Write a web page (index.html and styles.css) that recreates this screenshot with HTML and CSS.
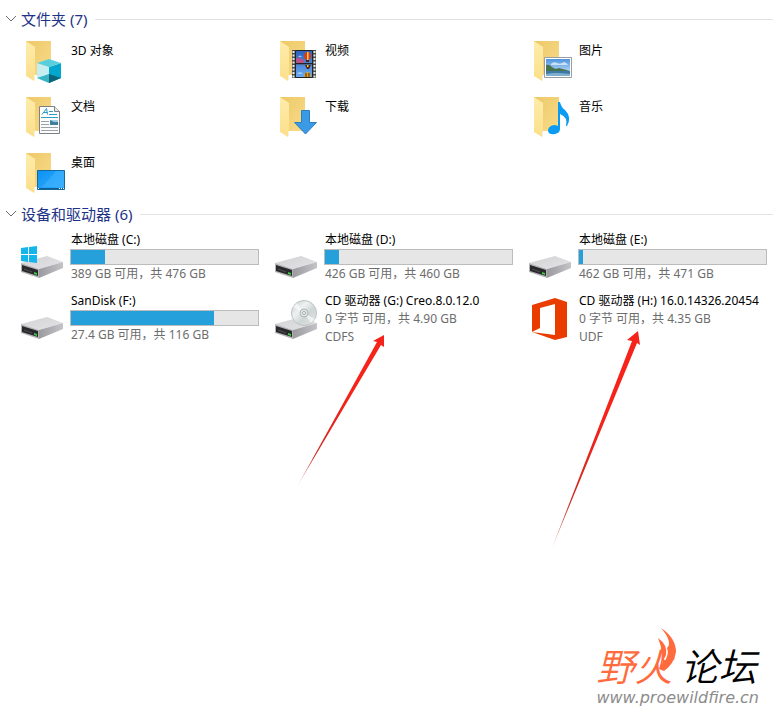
FILE: index.html
```
<!DOCTYPE html>
<html lang="zh-CN">
<head>
    <meta charset="UTF-8">
    <meta name="viewport" content="width=device-width, initial-scale=1.0">
    <title>此电脑</title>
    <link rel="stylesheet" href="styles.css">
</head>
<body>
    <!-- shared icon shapes -->
    <svg class="defs" width="0" height="0" aria-hidden="true">
        <defs>
            <linearGradient id="back" x1="0" y1="0" x2="1" y2="1">
                <stop offset="0" stop-color="#edc867"/>
                <stop offset="1" stop-color="#f8dc8b"/>
            </linearGradient>
            <linearGradient id="flap" x1="0" y1="0" x2="0" y2="1">
                <stop offset="0" stop-color="#ffecab"/>
                <stop offset="1" stop-color="#fbdf8a"/>
            </linearGradient>
            <linearGradient id="metal" x1="0" y1="0" x2="1" y2="1">
                <stop offset="0" stop-color="#d2d2d5"/>
                <stop offset="1" stop-color="#e4e4e7"/>
            </linearGradient>
            <linearGradient id="side" x1="0" y1="0" x2="1" y2="0">
                <stop offset="0" stop-color="#9b9b9f"/>
                <stop offset="1" stop-color="#c4c4c8"/>
            </linearGradient>
            <linearGradient id="sky" x1="0" y1="0" x2="0" y2="1">
                <stop offset="0" stop-color="#4f94dd"/>
                <stop offset="1" stop-color="#d3ebfa"/>
            </linearGradient>
            <linearGradient id="film" x1="0" y1="0" x2="0" y2="1">
                <stop offset="0" stop-color="#2d62bd"/>
                <stop offset="1" stop-color="#69aaf0"/>
            </linearGradient>
            <linearGradient id="screen" x1="0" y1="0" x2="1" y2="1">
                <stop offset="0" stop-color="#0c91f2"/>
                <stop offset="1" stop-color="#31adff"/>
            </linearGradient>
            <linearGradient id="disc" x1="0" y1="0" x2="1" y2="1">
                <stop offset="0" stop-color="#c5cccc"/>
                <stop offset="0.35" stop-color="#eef1f1"/>
                <stop offset="0.6" stop-color="#ced5d5"/>
                <stop offset="1" stop-color="#e5e9e9"/>
            </linearGradient>
            <linearGradient id="arrow" x1="0" y1="1" x2="0" y2="0">
                <stop offset="0" stop-color="#b8372f" stop-opacity="0.5"/>
                <stop offset="0.2" stop-color="#cc2a20"/>
                <stop offset="0.6" stop-color="#f5231a"/>
            </linearGradient>
            <symbol id="folder" viewBox="0 0 48 48">
                <path d="M7 4H32V38H16L7 36Z" fill="url(#back)"/>
                <path d="M7 4L16 10V38L15 39V44L7 39Z" fill="url(#flap)"/>
                <path d="M15 39l1-1v5l-1 1z" fill="#f3efe4"/>
            </symbol>
            <symbol id="drive" viewBox="0 0 48 48">
                <path d="M2 32L28 25L44 31L20 38Z" fill="url(#metal)"/>
                <path d="M20 38L44 31V37L20 47Z" fill="url(#side)"/>
                <path d="M2 32L20 38V47L2 41Z" fill="#b3b3b6"/>
                <path d="M3 34L19 39V45L3 40Z" fill="#29292c"/>
                <path d="M5 38l8 3" stroke="#505052"/>
                <path d="M15 41l3 1v2l-3-1z" fill="#3dcb42"/>
            </symbol>
        </defs>
    </svg>

    <main>
        <section>
            <h2 class="group-title">
                <svg class="chevron" width="12" height="8" viewBox="0 0 12 8" aria-hidden="true"><path d="M1 1l5 5 5-5"/></svg>
                文件夹 (7)
            </h2>
            <ul class="tiles folders">
                <li class="tile">
                    <svg class="icon" viewBox="0 0 48 48" aria-hidden="true">
                        <use href="#folder"/>
                        <path d="M18 26L30 30V46L18 41Z" fill="#c5eef3"/>
                        <path d="M30 30L42 26V41L30 46Z" fill="#03a6cf"/>
                        <path d="M18 26L30 22L42 26L30 30Z" fill="#59cfde"/>
                        <path d="M18 41L30 37V46Z" fill="#37b5c4"/>
                        <path d="M30 37L42 41L30 46Z" fill="#08657a"/>
                    </svg>
                    <span class="name">3D 对象</span>
                </li>
                <li class="tile">
                    <svg class="icon" viewBox="0 0 48 48" aria-hidden="true">
                        <use href="#folder"/>
                        <path d="M19 13H43V41H19Z" fill="#4b4b4b"/>
                        <path d="M20.500 14V41M41.500 14V41" stroke="#e9e9e9" stroke-width="2" stroke-dasharray="2 1.500"/>
                        <path d="M22.500 14H39.500V26H22.500ZM22.500 27.500H39.500V40H22.500Z" fill="url(#film)"/>
                        <path d="M23 22l3-2 2 2 3 1v3h-8z" fill="#b9518a"/>
                        <path d="M25 20q2-3 4 0zM24 37q3-4 6 0z" fill="#9fc8f2"/>
                        <ellipse cx="34.500" cy="19" rx="3.500" ry="4" fill="#d5392a"/>
                        <path d="M34 15h1.500v8h-1.500z" fill="#f5d327"/>
                        <path d="M33 23h3v2h-3zM32 28h6l-2 4h-2z" fill="#4c211f"/>
                        <path d="M34 28h1.500v2h-1.500z" fill="#f5d327"/>
                        <path d="M31 40q0-5 3.500-5t3.500 5z" fill="#d5a526"/>
                        <path d="M33 36v4M36 36v4" stroke="#5d2523"/>
                        <path d="M22.500 13.500H39.500V40.500H22.500ZM22 26.500H40" fill="none" stroke="#222"/>
                    </svg>
                    <span class="name">视频</span>
                </li>
                <li class="tile">
                    <svg class="icon" viewBox="0 0 48 48" aria-hidden="true">
                        <use href="#folder"/>
                        <path d="M17.500 20.500H44.500V40.500H17.500Z" fill="#fff" stroke="#999da1"/>
                        <path d="M19 22H43V39H19Z" fill="url(#sky)"/>
                        <path d="M24 27q3-3 6-1t7-1q3 1 4 3H24z" fill="#c9e2f7"/>
                        <path d="M19 28q3-1 6 2t7 1l11 3v2H19z" fill="#46734e"/>
                        <path d="M19 34q10 0 24 0v5H19z" fill="#3f79a6"/>
                        <path d="M19 37q8-2 24 0v2H19z" fill="#7fb0cf"/>
                    </svg>
                    <span class="name">图片</span>
                </li>
                <li class="tile">
                    <svg class="icon" viewBox="0 0 48 48" aria-hidden="true">
                        <use href="#folder"/>
                        <path d="M20.500 13.500H35.500L40.500 18.500V40.500H20.500Z" fill="#fdfdfd" stroke="#7c8185"/>
                        <path d="M35.500 13.500V18.500H40.500" fill="#e3e5e7" stroke="#7c8185"/>
                        <path d="M23 21.500l4.500-6 1 6M24.500 19.500h4" fill="none" stroke="#2b9ac4"/>
                        <path d="M30 18.500h4M30 21.500h8M22 24.500h17" stroke="#2c9fc9"/>
                        <path d="M22 28.500h8M22 31.500h8M22 34.500h17M22 37.500h17" stroke="#9ca3a8"/>
                        <path d="M31 27h8v5h-8z" fill="#3e8096"/>
                        <path d="M31 27h8v2h-4z" fill="#a9cfe8"/>
                    </svg>
                    <span class="name">文档</span>
                </li>
                <li class="tile">
                    <svg class="icon" viewBox="0 0 48 48" aria-hidden="true">
                        <use href="#folder"/>
                        <path d="M28.500 17.500H36.500V29.500H43.500L32.500 41L21.500 29.500H28.500Z" fill="#3b9ae6" stroke="#2c7fc2"/>
                    </svg>
                    <span class="name">下载</span>
                </li>
                <li class="tile">
                    <svg class="icon" viewBox="0 0 48 48" aria-hidden="true">
                        <use href="#folder"/>
                        <path d="M31 9h2q1 5 5 8 7 7 2 16h-1q2-9-6-12V36q0 4-5 5-6 1-7-3 0-5 6-6 2 0 4 1z" fill="#0b9bf2"/>
                    </svg>
                    <span class="name">音乐</span>
                </li>
                <li class="tile">
                    <svg class="icon" viewBox="0 0 48 48" aria-hidden="true">
                        <use href="#folder"/>
                        <path d="M18.500 21.500H45.500V40.500H18.500Z" fill="url(#screen)" stroke="#146a9e"/>
                        <path d="M37 22H45V38H23Z" fill="#48b6ff" opacity="0.5"/>
                        <path d="M19 39.500H45" stroke="#0d5c92"/>
                        <path d="M19 39.500h1M40 39.500h1M42 39.500h1M44 39.500h1" stroke="#fff"/>
                    </svg>
                    <span class="name">桌面</span>
                </li>
            </ul>
        </section>

        <section>
            <h2 class="group-title">
                <svg class="chevron" width="12" height="8" viewBox="0 0 12 8" aria-hidden="true"><path d="M1 1l5 5 5-5"/></svg>
                设备和驱动器 (6)
            </h2>
            <ul class="tiles drives">
                <li class="tile">
                    <svg class="icon" viewBox="0 0 48 48" aria-hidden="true">
                        <use href="#drive"/>
                        <path d="M2 17L9 16V23H2ZM10 16L18 15V23H10ZM2 24H9V31L2 30ZM10 24H18V32L10 31Z" fill="#13b5ea"/>
                    </svg>
                    <div class="info">
                        <label class="name" for="disk-c">本地磁盘 (C:)</label>
                        <progress id="disk-c" value="87" max="476"></progress>
                        <span class="detail">389 GB 可用，共 476 GB</span>
                    </div>
                </li>
                <li class="tile">
                    <svg class="icon" viewBox="0 0 48 48" aria-hidden="true"><use href="#drive"/></svg>
                    <div class="info">
                        <label class="name" for="disk-d">本地磁盘 (D:)</label>
                        <progress id="disk-d" value="34" max="460"></progress>
                        <span class="detail">426 GB 可用，共 460 GB</span>
                    </div>
                </li>
                <li class="tile">
                    <svg class="icon" viewBox="0 0 48 48" aria-hidden="true"><use href="#drive"/></svg>
                    <div class="info">
                        <label class="name" for="disk-e">本地磁盘 (E:)</label>
                        <progress id="disk-e" value="9" max="471"></progress>
                        <span class="detail">462 GB 可用，共 471 GB</span>
                    </div>
                </li>
                <li class="tile">
                    <svg class="icon" viewBox="0 0 48 48" aria-hidden="true"><use href="#drive"/></svg>
                    <div class="info">
                        <label class="name" for="disk-f">SanDisk (F:)</label>
                        <progress id="disk-f" value="88.6" max="116"></progress>
                        <span class="detail">27.4 GB 可用，共 116 GB</span>
                    </div>
                </li>
                <li class="tile">
                    <svg class="icon" viewBox="0 0 48 48" aria-hidden="true">
                        <use href="#drive"/>
                        <circle cx="31" cy="21" r="12.500" fill="url(#disc)" stroke="#bcc2c2"/>
                        <path d="M31 21L20 15L24 11ZM31 21L42 27L38 31Z" fill="#fff" opacity="0.6"/>
                        <circle cx="31" cy="21" r="4" fill="#e2e6e6" stroke="#aeb5b5"/>
                        <circle cx="31" cy="21" r="1.500" fill="#fff" stroke="#a0a7a7"/>
                    </svg>
                    <div class="info">
                        <span class="name">CD 驱动器 (G:) Creo.8.0.12.0</span>
                        <span class="detail">0 字节 可用，共 4.90 GB</span>
                        <span class="detail">CDFS</span>
                    </div>
                    <svg class="pointer" width="90" height="154" viewBox="0 0 90 154" aria-hidden="true">
                        <path d="M1 152L80 9L76 8L87 2V14L84 12Z" fill="url(#arrow)"/>
                    </svg>
                </li>
                <li class="tile">
                    <svg class="icon" viewBox="0 0 48 48" aria-hidden="true">
                        <path d="M5 13L28 6L40 10V45L28 48L5 40L28 43V12L13 16V36L5 40Z" fill="#eb3c00"/>
                    </svg>
                    <div class="info">
                        <span class="name">CD 驱动器 (H:) 16.0.14326.20454</span>
                        <span class="detail">0 字节 可用，共 4.35 GB</span>
                        <span class="detail">UDF</span>
                    </div>
                    <svg class="pointer" width="92" height="218" viewBox="0 0 92 218" aria-hidden="true">
                        <path d="M1 215L81 8L76 7L87 -2L89 12L86 10Z" fill="url(#arrow)"/>
                    </svg>
                </li>
            </ul>
        </section>
    </main>

    <footer class="brand">
        <div class="brand-name">
            <span class="fire">野火</span>
            <span>论坛</span>
            <svg class="flame" width="22" height="44" viewBox="0 0 22 44" aria-hidden="true">
                <path d="M5 0Q20 10 20 24Q18 36 8 43L3 41Q7 35 8 30Q8 34 10 31Q13 25 11 20Q17 14 5 0ZM2 10Q12 17 10 27L6 35L8 41L3 41Q9 26 2 10Z" fill="#ff6b3d"/>
            </svg>
        </div>
        <div class="brand-url">www.proewildfire.cn</div>
    </footer>
</body>
</html>
```

FILE: styles.css
```
* {
    box-sizing: border-box;
}

body {
    margin: 0;
    min-height: 100vh;
    display: flex;
    flex-direction: column;
    font-family: "Noto Sans", "Noto Sans CJK SC", sans-serif;
    font-size: 12px;
    line-height: 18px;
    color: #000000;
    background-color: #ffffff;
}

.defs {
    position: absolute;
}

main {
    padding-top: 9px;
}

.group-title {
    display: flex;
    align-items: center;
    gap: 4px;
    margin: 0;
    padding: 0 8px 0 5px;
    font-size: 15px;
    font-weight: normal;
    line-height: 20px;
    color: #1e3287;
}

.group-title::after {
    content: "";
    flex: 1;
    height: 1px;
    margin-left: 4px;
    background-color: #e2e2e2;
}

.chevron path {
    fill: none;
    stroke: #6b6b6b;
}

.tiles {
    display: grid;
    grid-template-columns: repeat(3, 1fr);
    margin: 0;
    padding: 0 0 0 19px;
    list-style: none;
}

.tile {
    position: relative;
    display: flex;
    align-items: flex-start;
    gap: 3px;
    min-width: 0;
}

.icon {
    flex: none;
    width: 48px;
    height: 48px;
}

.name,
.detail {
    padding-left: 1px;
}

.folders {
    padding-top: 7px;
}

.folders .tile {
    height: 56px;
    padding-top: 1px;
}

.folders .name {
    padding-top: 5px;
}

.drives {
    padding-top: 2px;
}

.drives .tile {
    min-height: 61px;
    padding-top: 5px;
}

.info {
    flex: 1;
    min-width: 0;
    margin-right: 14px;
    white-space: nowrap;
}

.info .name,
.detail {
    display: block;
}

.detail {
    color: #6d6d6d;
}

progress {
    appearance: none;
    display: block;
    width: 100%;
    height: 16px;
    border: 1px solid #bcbcbc;
    background-color: #e6e6e6;
}

progress::-webkit-progress-bar {
    background-color: #e6e6e6;
}

progress::-webkit-progress-value {
    background-color: #26a0da;
}

.pointer {
    position: absolute;
    left: 24px;
    top: 46px;
    overflow: visible;
}

.brand {
    align-self: flex-end;
    margin-top: auto;
    padding: 0 22px 6px 0;
}

.brand-name {
    position: relative;
    display: flex;
    gap: 8px;
    font-family: "Noto Sans CJK SC", sans-serif;
    font-size: 38px;
    font-style: italic;
    font-weight: 350;
    line-height: 48px;
}

.fire {
    color: #ff6b3d;
}

.flame {
    position: absolute;
    left: 60px;
    top: -13px;
}

.brand-url {
    font-family: "DejaVu Sans", sans-serif;
    font-size: 16px;
    font-style: italic;
    line-height: 18px;
    color: #8c8c8c;
}
```
